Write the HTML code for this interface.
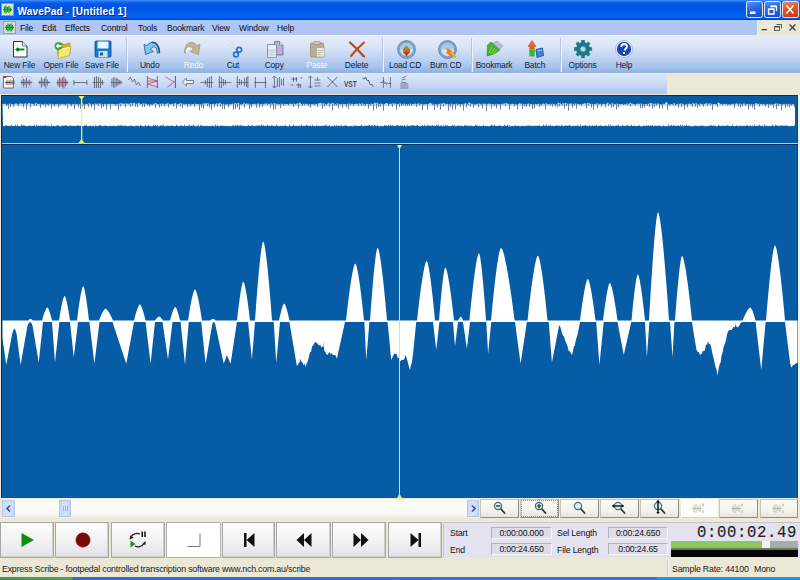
<!DOCTYPE html>
<html><head><meta charset="utf-8">
<style>
*{margin:0;padding:0;box-sizing:border-box}
html,body{width:800px;height:580px;overflow:hidden;background:#ece9d8;font-family:"Liberation Sans",sans-serif;}
.a{position:absolute}
#title{left:0;top:0;width:800px;height:20px;background:linear-gradient(#3d95ff 0,#2a7af8 1px,#0a5ce8 3px,#0054e0 6px,#0058e6 11px,#0062f2 15px,#0058f0 19px,#0040c8 19px,#0040c8 20px);}
#title .t{left:17.5px;top:4.5px;color:#fff;font-weight:bold;font-size:10px;letter-spacing:0.18px;line-height:13px;white-space:pre;text-shadow:1px 1px 0 #0a2a80;}
#menu{left:0;top:20px;width:800px;height:15px;background:linear-gradient(#a9c8f0,#afc5f5 40%,#b0c4ee);}
#menu span{position:absolute;top:2px;font-size:8.5px;letter-spacing:-0.12px;line-height:13px;color:#0a0a14;white-space:pre}
#mdi{left:757px;top:20px;width:43px;height:15px;background:#ebe8d6}
#tb{left:0;top:35px;width:800px;height:38px;background:linear-gradient(#e6edfa 0%,#dbe5f7 30%,#c2d5f2 58%,#a4c2ec 85%,#90b4e8 97%,#a4b2cc 100%);}
#tb .l{position:absolute;top:25px;font-size:8.4px;letter-spacing:-0.12px;line-height:10px;color:#08122a;white-space:pre;text-align:center}
#tb .sep{position:absolute;top:3px;width:1px;height:34px;background:#b4c6e6;box-shadow:1px 0 0 #eef3fc}
#tb2{left:0;top:73px;width:667px;height:22px;background:linear-gradient(#dce8f9 0%,#cfe0f6 35%,#b8d0f2 75%,#a6c3ee 100%);}
#tb2r{left:667px;top:73px;width:133px;height:22px;background:#ebe8d7}
#wave{left:0;top:94px;width:800px;height:404px;background:#ece9d8}
#status{left:0;top:559px;width:800px;height:18px;background:#ebe8d8;}
#status span{position:absolute;top:5px;font-size:8.8px;letter-spacing:-0.2px;line-height:10px;color:#1a1a1a;white-space:pre}
#task{left:0;top:577px;width:800px;height:3px;background:linear-gradient(90deg,#3f9a46 0,#4aa850 72px,#2d6fd6 73px,#2f72d8 656px,#1a98ea 657px,#1a98ea 800px)}
.btn{position:absolute;top:522px;height:36px;background:linear-gradient(#fbfbfb 0%,#f3f3f3 50%,#e2e2e2 100%);border:1px solid #a7a7a7;box-shadow:inset -1px -1px 0 #cfcfcf}
.zb{position:absolute;top:499px;height:19px;background:linear-gradient(#fdfdfd,#ecebe6);border:1px solid #b9b7ae;border-bottom-color:#8a887e;border-right-color:#8a887e}
#info{left:442px;top:521px;width:358px;height:38px;background:#e3e1ee;border-top:1px solid #bdbdbd}
.lab{position:absolute;font-size:8.7px;letter-spacing:-0.15px;line-height:10px;color:#111;white-space:pre}
.vb{position:absolute;height:12px;background:#dfdde8;border-top:1px solid #b4b3bd;border-left:1px solid #b4b3bd;border-bottom:1px solid #f5f5f8;border-right:1px solid #f5f5f8}
</style></head><body>
<!-- title -->
<div id="title" class="a">
 <svg class="a" style="left:1px;top:3px" width="13" height="13" viewBox="0 0 13 13"><rect x="0.5" y="0.5" width="12" height="12" fill="#d8e4d0" stroke="#8fa08a"/><path d="M2 6.5h9M3.5 3.5v6M5 2.5v8M6.5 4v5M8 3v7M9.5 4.5v4" stroke="#0a9a1a" stroke-width="1.2"/></svg>
 <div class="a t">WavePad - [Untitled 1]</div>
 <svg class="a" style="left:745px;top:0" width="55" height="19" viewBox="745 0 55 19"><defs><linearGradient id="gb" x1="0" y1="0" x2="0.3" y2="1"><stop offset="0" stop-color="#5b95f7"/><stop offset="0.5" stop-color="#2a67e8"/><stop offset="1" stop-color="#1c52d4"/></linearGradient><linearGradient id="gr" x1="0" y1="0" x2="0.3" y2="1"><stop offset="0" stop-color="#f08a6a"/><stop offset="0.5" stop-color="#e0582e"/><stop offset="1" stop-color="#c8401c"/></linearGradient></defs><rect x="746.5" y="1.5" width="16" height="16" rx="2" fill="url(#gb)" stroke="#dfe8fa" stroke-width="1"/><rect x="764.5" y="1.5" width="16" height="16" rx="2" fill="url(#gb)" stroke="#dfe8fa" stroke-width="1"/><rect x="782.5" y="1.5" width="16" height="16" rx="2" fill="url(#gr)" stroke="#dfe8fa" stroke-width="1"/><rect x="750" y="11.5" width="5.5" height="2.5" fill="#fff"/><path d="M770.5 6.5h6v4.5M768.5 9.2h5.5v4.8h-5.5z" fill="none" stroke="#fff" stroke-width="1.3"/><rect x="768.5" y="8.5" width="5.5" height="1.5" fill="#fff"/><rect x="770.5" y="5.5" width="6" height="1.5" fill="#fff"/><path d="M786.5 5.5l7 8M793.5 5.5l-7 8" stroke="#fff" stroke-width="1.5"/></svg>
</div>
<!-- menu -->
<div id="menu" class="a">
 <svg class="a" style="left:3px;top:1px" width="13" height="13" viewBox="0 0 13 13"><rect x="0.5" y="0.5" width="12" height="12" fill="#d4dcd8" stroke="#98a0a8" stroke-width="1"/><path d="M2 6.5h9M3.5 4v5M5 2.5v8M6.5 3.5v6M8 2.5v8M9.5 4v5" stroke="#0a9a1a" stroke-width="1.2"/></svg>
 <span style="left:20px">File</span><span style="left:42px">Edit</span><span style="left:65px">Effects</span><span style="left:101px">Control</span><span style="left:138px">Tools</span><span style="left:167px">Bookmark</span><span style="left:212px">View</span><span style="left:239px">Window</span><span style="left:277px">Help</span>
</div>
<div id="mdi" class="a"><svg class="a" style="left:0;top:0" width="43" height="15" viewBox="757 20 43 15"><rect x="761.5" y="29" width="5.5" height="1.3" fill="#444"/><path d="M776.5 24.5h5v4M774.5 26.5h5v4h-5z" fill="none" stroke="#444" stroke-width="0.9"/><rect x="774.5" y="26.3" width="5" height="1.1" fill="#444"/><path d="M789.5 24.5l6 6M795.5 24.5l-6 6" stroke="#444" stroke-width="1.3"/></svg></div>
<!-- toolbar -->
<div id="tb" class="a">
<svg class="a" style="left:12.0px;top:4.5px" width="19" height="19" viewBox="0 0 19 19"><path d="M1.5 1.5h9l4.5 4.5v11h-13.5z" fill="#fff" stroke="#333" stroke-width="1"/><path d="M10.5 1.5v4.5h4.5" fill="#eee" stroke="#555" stroke-width="0.8"/><path d="M3 9.5l3-2.5v1.6h6.5v1.8h-6.5v1.6z" fill="#0d8a1a"/><rect x="6" y="8" width="1" height="3" fill="#0a6a12"/></svg><div class="l" style="left:-10.5px;width:60px;color:#0e1a33;">New File</div><svg class="a" style="left:53.6px;top:4.5px" width="19" height="19" viewBox="0 0 19 19"><path d="M2.5 5.5l5.5-2l2 1.2l6-1.7v11l-11.5 3.5z" fill="#c8b820" stroke="#9a8c10" stroke-width="0.7"/><path d="M4.5 8.5l12.5-2.5l-1.5 9.5l-11.5 3z" fill="#f0ea70" stroke="#b8a818" stroke-width="0.7"/><path d="M6 9.5l9.5-2" stroke="#fffbb0" stroke-width="0.8"/><circle cx="4.5" cy="6" r="3.6" fill="#3cb030" stroke="#1a7a1a" stroke-width="0.6"/><path d="M1.5 6l3-2.5v1.6h3v1.8h-3v1.6z" fill="#e8ffe0"/></svg><div class="l" style="left:31.0px;width:60px;color:#0e1a33;">Open File</div><svg class="a" style="left:94.0px;top:4.5px" width="19" height="19" viewBox="0 0 19 19"><rect x="1" y="1" width="16" height="16" rx="1" fill="#1878c8" stroke="#0a4a90" stroke-width="0.8"/><rect x="3.5" y="1.5" width="11" height="7" fill="#eaf4ff"/><rect x="4.5" y="11" width="9" height="6" fill="#cfe2f5"/><rect x="6" y="12.5" width="3" height="3" fill="#1a5aa0"/></svg><div class="l" style="left:72.0px;width:60px;color:#0e1a33;">Save File</div><svg class="a" style="left:142.0px;top:4.5px" width="19" height="19" viewBox="0 0 19 19"><path d="M17.5 13C17.5 6 14 1.5 9.5 2.5C7.5 3 6 4 5 5.5L2 4.5L3.5 14.5L11.5 11.5L8.5 9.5C9.5 7.5 11 6.5 12.5 7C14.5 7.5 15.5 10 15 13Z" fill="#86c0ea" stroke="#2a6aa8" stroke-width="0.9"/><path d="M17.5 13C17.5 6 14 1.5 9.5 2.5" fill="none" stroke="#1a5a98" stroke-width="1.6"/></svg><div class="l" style="left:119.7px;width:60px;color:#0e1a33;">Undo</div><svg class="a" style="left:183.0px;top:4.5px" width="19" height="19" viewBox="0 0 19 19"><g transform="translate(19,0) scale(-1,1)"><path d="M17.5 13C17.5 6 14 1.5 9.5 2.5C7.5 3 6 4 5 5.5L2 4.5L3.5 14.5L11.5 11.5L8.5 9.5C9.5 7.5 11 6.5 12.5 7C14.5 7.5 15.5 10 15 13Z" fill="#c2b496" stroke="#a89878" stroke-width="0.9"/><path d="M15.5 13C15.5 10 14 8 12 8" fill="none" stroke="#fff" stroke-width="1.5"/></g></svg><div class="l" style="left:163.5px;width:60px;color:#f4f6fa;text-shadow:0 0 1px #b8c4d8;">Redo</div><svg class="a" style="left:224.8px;top:4.5px" width="19" height="19" viewBox="0 0 19 19"><path d="M2 4l9 6M5 1l6 9" stroke="#f4f6f8" stroke-width="1.8"/><path d="M2 4l9 6M5 1l6 9" stroke="#9aa4b0" stroke-width="0.5"/><circle cx="14.2" cy="9.8" r="2.4" fill="none" stroke="#2a72c8" stroke-width="1.7"/><circle cx="11" cy="14.5" r="2.4" fill="none" stroke="#2a72c8" stroke-width="1.7"/></svg><div class="l" style="left:203.0px;width:60px;color:#0e1a33;">Cut</div><svg class="a" style="left:266.0px;top:4.5px" width="19" height="19" viewBox="0 0 19 19"><path d="M8.5 1.5h5l3.5 3.5v10h-8.5z" fill="#b8b0d0" stroke="#6a6890" stroke-width="0.8"/><path d="M13.5 1.5v3.5h3.5" fill="#e8e4f4" stroke="#6a6890" stroke-width="0.6"/><path d="M1.5 4.5h9v13h-9z" fill="#e8eef6" stroke="#7a7e98" stroke-width="0.8"/><path d="M2.5 9.5h7v6h-7z" fill="#c8d2dc"/><path d="M2.5 11.5h7M2.5 13.5h7" stroke="#e8eef6" stroke-width="0.6"/></svg><div class="l" style="left:244.2px;width:60px;color:#0e1a33;">Copy</div><svg class="a" style="left:308.5px;top:4.5px" width="19" height="19" viewBox="0 0 19 19"><rect x="1.5" y="3" width="13" height="14" rx="1" fill="#b8ae96" stroke="#9a9078" stroke-width="0.8"/><rect x="5" y="1.5" width="6" height="3" fill="#d0c8b4" stroke="#9a9078" stroke-width="0.6"/><path d="M7.5 7.5h8v9.5h-8z" fill="#e8e4da" stroke="#a8a08c" stroke-width="0.7"/><path d="M9 10.5h5M9 12.5h5M9 14.5h3" stroke="#aaa" stroke-width="0.6"/></svg><div class="l" style="left:287.0px;width:60px;color:#f4f6fa;text-shadow:0 0 1px #b8c4d8;">Paste</div><svg class="a" style="left:348.0px;top:4.5px" width="19" height="19" viewBox="0 0 19 19"><path d="M2 2.5C6 6 10 10 16 16.5" stroke="#c44414" stroke-width="2.3" stroke-linecap="round"/><path d="M16 2.5C12 6 7 11 3 16" stroke="#c84a18" stroke-width="2.1" stroke-linecap="round"/></svg><div class="l" style="left:326.5px;width:60px;color:#0e1a33;">Delete</div><svg class="a" style="left:396.5px;top:4.5px" width="19" height="19" viewBox="0 0 19 19"><circle cx="9.5" cy="9.5" r="9" fill="#7aa4cc" stroke="#5a84b0" stroke-width="0.8"/><circle cx="9.5" cy="9.5" r="6.5" fill="#d0e4f4"/><path d="M3 9.5a6.5 6.5 0 0 1 13 0" fill="#a8c8e4"/><circle cx="9.5" cy="11" r="3.6" fill="#e85a10"/><circle cx="9.5" cy="8" r="2" fill="#60b040"/><path d="M7 12l2.5 5l2.5-5z" fill="#c83808"/></svg><div class="l" style="left:375.0px;width:60px;color:#0e1a33;">Load CD</div><svg class="a" style="left:438.3px;top:4.5px" width="19" height="19" viewBox="0 0 19 19"><circle cx="9.5" cy="9.5" r="9" fill="#7aa4cc" stroke="#5a84b0" stroke-width="0.8"/><circle cx="9.5" cy="9.5" r="6.5" fill="#d0e4f4"/><path d="M3 9.5a6.5 6.5 0 0 1 13 0" fill="#a8c8e4"/><path d="M7 8c4 0 9 4 11 10c-4-1-8-3-10-5.5c2-1 2-3-1-4.5z" fill="#f07818"/><path d="M11 12l7 6l-3-5z" fill="#ffc030"/></svg><div class="l" style="left:415.7px;width:60px;color:#0e1a33;">Burn CD</div><svg class="a" style="left:484.6px;top:4.5px" width="19" height="19" viewBox="0 0 19 19"><path d="M2 16L2.5 5L6 2L15 10L9 14z" fill="#44b42a" stroke="#2a8a1a" stroke-width="0.6"/><path d="M4 13l3-6M6 14l4-6M8.5 14l3-4" stroke="#8ad860" stroke-width="0.9"/><path d="M8 3l4-2l6 5l-3 3z" fill="#b0b0d8" stroke="#8888b8" stroke-width="0.5"/><path d="M10 3.5l5 4M12 2.5l5 4" stroke="#e8e8f8" stroke-width="0.6"/></svg><div class="l" style="left:464.0px;width:60px;color:#0e1a33;">Bookmark</div><svg class="a" style="left:526.0px;top:4.5px" width="19" height="19" viewBox="0 0 19 19"><path d="M6 0.5l4 6h-8z" fill="#e86a28" stroke="#b04010" stroke-width="0.5"/><path d="M3.5 6.5h5v3h-5z" fill="#d85a20"/><path d="M3 9.5h6l-0.5 7h-5z" fill="#3ab83a"/><path d="M10 9.5l6.5-1.5l1 7.5l-6.5 2z" fill="#3a88d8" stroke="#1a4aa0" stroke-width="0.8"/><path d="M11.5 11l4.5-1" stroke="#b8e0ff" stroke-width="0.8"/></svg><div class="l" style="left:504.8px;width:60px;color:#0e1a33;">Batch</div><svg class="a" style="left:573.6px;top:4.5px" width="19" height="19" viewBox="0 0 19 19"><path d="M15.44 7.56L17.67 7.51L17.67 10.49L15.44 10.44L15.10 11.53L14.57 12.54L16.19 14.08L14.08 16.19L12.54 14.57L11.53 15.10L10.44 15.44L10.49 17.67L7.51 17.67L7.56 15.44L6.47 15.10L5.46 14.57L3.92 16.19L1.81 14.08L3.43 12.54L2.90 11.53L2.56 10.44L0.33 10.49L0.33 7.51L2.56 7.56L2.90 6.47L3.43 5.46L1.81 3.92L3.92 1.81L5.46 3.43L6.47 2.90L7.56 2.56L7.51 0.33L10.49 0.33L10.44 2.56L11.53 2.90L12.54 3.43L14.08 1.81L16.19 3.92L14.57 5.46L15.10 6.47Z" fill="#1a7a8a" stroke="#0e5a68" stroke-width="0.5"/><circle cx="9" cy="9" r="2.6" fill="#bfd8e0"/></svg><div class="l" style="left:552.5px;width:60px;color:#0e1a33;">Options</div><svg class="a" style="left:615.0px;top:4.5px" width="19" height="19" viewBox="0 0 19 19"><circle cx="9" cy="9" r="8.5" fill="#fff" stroke="#8090b0" stroke-width="0.6"/><circle cx="9" cy="9" r="7.2" fill="#1848b8"/><path d="M6.3 7c0-2 1.3-3 2.9-3s2.8 1 2.8 2.6c0 1.8-2.2 2-2.2 3.8" fill="none" stroke="#fff" stroke-width="1.8"/><rect x="8" y="12" width="2" height="2" fill="#fff"/></svg><div class="l" style="left:594.0px;width:60px;color:#0e1a33;">Help</div><div class="sep" style="left:126px"></div><div class="sep" style="left:382px"></div><div class="sep" style="left:471px"></div><div class="sep" style="left:560px"></div>
</div>
<div id="tb2" class="a"><svg class="a" style="left:0;top:0" width="667" height="21" viewBox="0 73 667 21"><path d="M3.4000000000000004 76.5h8l2 2v9.5h-10z" fill="#fff" stroke="#333" stroke-width="0.68"/><rect x="3.4000000000000004" y="76" width="3" height="2" fill="#e02020"/><path d="M4.9 82.5h7" stroke="#402020" stroke-width="0.68"/><path d="M6.4 80.5v4.0M7.9 79.5v6.0M9.4 80.5v4.0M10.9 79.5v6.0M12.4 80.5v4.0M13.9 80.5v4.0" stroke="#402020" stroke-width="0.60"/><rect x="21.9" y="76.5" width="9" height="11" fill="none" stroke="#e070a0" stroke-width="0.60" stroke-dasharray="1.2 1.2"/><path d="M20.4 82.5h12" stroke="#485060" stroke-width="0.68"/><path d="M21.9 80.5v4.0M23.4 78.5v8.0M24.9 79.5v6.0M26.4 77.5v10.0M27.9 80.5v4.0M29.4 79.5v6.0M30.9 81.5v2.0" stroke="#485060" stroke-width="0.75"/><path d="M38.4 82.5h12" stroke="#485060" stroke-width="0.68"/><path d="M39.9 80.5v4.0M41.4 77.5v10.0M42.9 79.5v6.0M44.4 78.5v8.0M45.9 76.5v12.0M47.4 79.5v6.0M48.9 81.5v2.0" stroke="#485060" stroke-width="0.75"/><path d="M56.4 82.5h12" stroke="#703048" stroke-width="0.68"/><path d="M57.9 79.5v6.0M59.4 77.5v10.0M60.9 78.5v8.0M62.4 77.5v10.0M63.9 76.5v12.0M65.4 78.5v8.0M66.9 80.5v4.0" stroke="#703048" stroke-width="0.75"/><path d="M73.9 82.5h13M73.9 80v5M86.9 80v5" stroke="#485060" stroke-width="0.75"/><path d="M92.4 82.5h12" stroke="#485060" stroke-width="0.60"/><path d="M94.4 77v11M96.4 76v12M98.4 77v11M100.4 78v10M102.4 80v5" stroke="#485060" stroke-width="0.83"/><path d="M110.4 82.5h12" stroke="#406070" stroke-width="0.68"/><path d="M111.9 78.5v8.0M113.4 77.5v10.0M114.9 77.5v10.0M116.4 78.5v8.0M117.9 79.5v6.0M119.4 80.5v4.0M120.9 80.5v4.0" stroke="#406070" stroke-width="0.75"/><path d="M116.4 78l4 4l-4 3" fill="none" stroke="#d83050" stroke-width="0.75"/><path d="M128.4 80l2-3l2 5l2-3l2 6l2-3l2 4" fill="none" stroke="#485060" stroke-width="0.68"/><path d="M147.4 76v12M157.4 76v12" stroke="#485060" stroke-width="0.75"/><path d="M147.4 78l10 3l-10 3l10 3M147.4 81l10 0" fill="none" stroke="#d83050" stroke-width="0.68"/><path d="M175.4 76v12" stroke="#485060" stroke-width="0.90"/><path d="M165.4 77l9 5l-7 5" fill="none" stroke="#d83050" stroke-width="0.68"/><path d="M182.4 82l4-4v2.5h7v3h-7v2.5z" fill="#f0f4fa" stroke="#485060" stroke-width="0.68"/><path d="M200.4 82.5h13" stroke="#485060" stroke-width="0.68"/><path d="M205.4 80v5M207.4 78v9M209.4 77v11M211.4 76v12" stroke="#485060" stroke-width="0.75"/><path d="M218.4 82.5h13" stroke="#485060" stroke-width="0.68"/><path d="M219.4 76v12M221.4 77v11M223.4 79v7M225.4 80v5" stroke="#485060" stroke-width="0.75"/><path d="M236.4 82.5h12" stroke="#485060" stroke-width="0.68"/><path d="M237.4 76v12M239.4 79v6M241.4 80v5M244.4 78v8M246.4 77v10M247.9 76v12" stroke="#485060" stroke-width="0.75"/><path d="M254.39999999999998 82.5h12M255.39999999999998 77v11M265.4 77v11" stroke="#485060" stroke-width="0.75"/><path d="M274.4 76.5v11.5M272.4 78l2-2l2 2M272.4 86l2 2l2-2" fill="none" stroke="#485060" stroke-width="0.75"/><path d="M277.4 78v9M279.4 77v10M281.4 79v6M283.4 78v8" stroke="#485060" stroke-width="0.75"/><path d="M291.4 79h6M293.4 77v5M296.4 77v5M290.4 85h3M296.4 85h5M298.4 83v5M300.4 84v4" stroke="#485060" stroke-width="0.75"/><circle cx="301.4" cy="78" r="0.8" fill="#d83050"/><path d="M310.4 76.5v11.5M308.4 78l2-2l2 2M308.4 86l2 2l2-2" fill="none" stroke="#485060" stroke-width="0.75"/><path d="M314.4 80h6M314.4 83h6M314.4 86h6" stroke="#485060" stroke-width="0.68"/><path d="M317.4 77v4" stroke="#d83050" stroke-width="0.68"/><path d="M327.4 77l10 10M337.4 77l-10 10" stroke="#485060" stroke-width="0.83"/><text x="343.9" y="87" font-family="Liberation Sans" font-size="9" font-weight="bold" fill="#485060" textLength="13" lengthAdjust="spacingAndGlyphs">VST</text><path d="M362.4 78l2 1l1-2l2 4l1-1l2 5l1-1l2 3" fill="none" stroke="#485060" stroke-width="0.83"/><path d="M380.4 82.5l2 0l1-2l1 3l1-1l1 2l1-2l1 1h3M383.4 77v11M390.4 77v11" fill="none" stroke="#485060" stroke-width="0.68"/><path d="M402.4 78l4-2M401.4 80l4-1M401.4 82l5 1M400.4 84h8M400.4 86h8M400.4 88h8" stroke="#485060" stroke-width="0.68"/></svg></div>
<div id="tb2r" class="a"></div>
<!-- waveform -->
<div id="wave" class="a"><svg class="a" style="left:0;top:0" width="800" height="404" viewBox="0 94 800 404">
<rect x="0" y="95" width="800" height="403" fill="#ece9d8"/>
<rect x="1.5" y="95.5" width="796.5" height="404" fill="#065da6" stroke="#1e2e40" stroke-width="1"/>
<rect x="2" y="143" width="796" height="1" fill="#a8d2f8"/>
<rect x="2" y="144" width="796" height="1" fill="#06305a"/>
<path d="M2.5 104 L3 104.05 L4 104.07 L5 103.78 L6 103.94 L7 104.41 L8 104.58 L9 104.19 L10 103.3 L11 104.06 L12 104.12 L13 104.26 L14 104.6 L15 104.31 L16 102.74 L17 104.45 L18 104.13 L19 104.07 L20 103.67 L21 103.37 L22 103.99 L23 103.66 L24 104.16 L25 103.37 L26 103.62 L27 104.4 L28 103.81 L29 102.76 L30 103.86 L31 103.76 L32 103.84 L33 104.05 L34 104.17 L35 103.75 L36 102.74 L37 103.8 L38 104.2 L39 103.64 L40 104.3 L41 104.2 L42 103.98 L43 104.45 L44 104.49 L45 103.78 L46 103.63 L47 104.58 L48 104.13 L49 104.51 L50 103.62 L51 104.33 L52 103.68 L53 104.5 L54 104.39 L55 104.29 L56 104.02 L57 104.17 L58 104.18 L59 104.24 L60 104.33 L61 104.18 L62 103.68 L63 104.2 L64 104.3 L65 104.52 L66 103.9 L67 103.77 L68 104.04 L69 103.62 L70 104.51 L71 104.18 L72 104.1 L73 104.31 L74 103.77 L75 103.81 L76 104.09 L77 104.58 L78 103.63 L79 104.31 L80 104.19 L81 103.62 L82 102.8 L83 104.23 L84 104.56 L85 104.06 L86 103.91 L87 104.3 L88 104.36 L89 103.11 L90 103.73 L91 104.51 L92 104.48 L93 104.06 L94 104.32 L95 102.97 L96 104.58 L97 103.92 L98 103.29 L99 104.37 L100 103.21 L101 103.94 L102 103.75 L103 104.44 L104 104.09 L105 103.82 L106 104.33 L107 104.44 L108 103.98 L109 103.81 L110 104.12 L111 104.14 L112 103.63 L113 104 L114 104.09 L115 104.14 L116 104.52 L117 103.73 L118 104.5 L119 103.79 L120 103.73 L121 102.76 L122 103.96 L123 103.57 L124 103.8 L125 103.98 L126 102.81 L127 104.13 L128 103.35 L129 104.5 L130 103.03 L131 102.64 L132 103.7 L133 103.79 L134 102.59 L135 103.81 L136 104.1 L137 103.61 L138 104.11 L139 102.52 L140 104.43 L141 104.06 L142 104.07 L143 103.15 L144 103.78 L145 103.76 L146 103.62 L147 104.3 L148 104 L149 104.58 L150 104.51 L151 104.41 L152 104.48 L153 104.37 L154 103.67 L155 103.61 L156 102.81 L157 103.94 L158 104.13 L159 104.24 L160 103.66 L161 103.86 L162 103.8 L163 103.85 L164 104.11 L165 104.6 L166 103.68 L167 103.65 L168 103.33 L169 103.66 L170 104.13 L171 103.89 L172 103.88 L173 103.55 L174 104.35 L175 102.87 L176 103.67 L177 104.08 L178 104.12 L179 104.07 L180 103.27 L181 103.01 L182 104.04 L183 103.86 L184 104.38 L185 104.55 L186 103.71 L187 104.22 L188 104.29 L189 104.23 L190 103.85 L191 104.39 L192 104.03 L193 104.01 L194 104.15 L195 103.56 L196 104.26 L197 104.22 L198 104.02 L199 103.97 L200 103.93 L201 104.52 L202 103.7 L203 103.68 L204 104.29 L205 102.68 L206 103.9 L207 103.35 L208 102.9 L209 104.52 L210 104.04 L211 103.92 L212 103.95 L213 103.96 L214 103.79 L215 104.14 L216 103.78 L217 103.11 L218 104.17 L219 103.58 L220 102.58 L221 103.68 L222 104.35 L223 103.82 L224 104.36 L225 104.57 L226 104.14 L227 104.51 L228 104.27 L229 104.43 L230 104.24 L231 104.4 L232 103.75 L233 103.67 L234 103.89 L235 102.94 L236 103.09 L237 104.35 L238 102.74 L239 103.4 L240 104.36 L241 104.42 L242 104.49 L243 104.15 L244 102.4 L245 103.98 L246 103.87 L247 103.13 L248 104.4 L249 103.27 L250 104.47 L251 104.59 L252 103.75 L253 104.42 L254 103.68 L255 103.7 L256 104.56 L257 103.9 L258 103.28 L259 104.14 L260 104.43 L261 103.68 L262 104.32 L263 103.71 L264 104.57 L265 103.61 L266 103.84 L267 103.61 L268 103.81 L269 103.98 L270 103.94 L271 102.76 L272 104.55 L273 103.93 L274 102.72 L275 103.78 L276 103.85 L277 103.72 L278 104.52 L279 104.25 L280 103.99 L281 103.62 L282 104.58 L283 103.71 L284 103.68 L285 104.39 L286 103.76 L287 104.15 L288 103.74 L289 104.12 L290 103.8 L291 103.43 L292 104.3 L293 103.96 L294 103.22 L295 104.16 L296 104.51 L297 102.96 L298 103.64 L299 103.79 L300 102.15 L301 104.26 L302 104.34 L303 104.1 L304 103.74 L305 103.77 L306 104.17 L307 103.64 L308 104.56 L309 104.01 L310 104.36 L311 104.59 L312 104.01 L313 104.51 L314 104.03 L315 103.65 L316 104.33 L317 103.9 L318 103.72 L319 102.95 L320 103.84 L321 102.47 L322 104.27 L323 103.29 L324 103.31 L325 104.14 L326 103.84 L327 103.66 L328 104 L329 102.3 L330 104.1 L331 103.63 L332 103.24 L333 102.75 L334 103.8 L335 104.32 L336 103.91 L337 103.27 L338 103.71 L339 104.04 L340 104.26 L341 104.26 L342 103.83 L343 104.27 L344 103.69 L345 104.13 L346 104.2 L347 103.98 L348 103.85 L349 103.79 L350 103.63 L351 103.98 L352 103.78 L353 103.96 L354 104.12 L355 104.28 L356 103.77 L357 103.55 L358 104.39 L359 103.22 L360 103.64 L361 104.17 L362 103.01 L363 104.04 L364 103.67 L365 104.14 L366 103.75 L367 103.91 L368 103.86 L369 104.04 L370 104.29 L371 103.66 L372 103.82 L373 104.09 L374 103.74 L375 102.3 L376 103.99 L377 102.18 L378 103.95 L379 103.84 L380 103.96 L381 103.61 L382 103.66 L383 104.46 L384 104.06 L385 103.98 L386 103.12 L387 103.1 L388 104.05 L389 103.89 L390 104.29 L391 103.23 L392 104.52 L393 102.56 L394 104.37 L395 103.62 L396 103.68 L397 104.37 L398 103.93 L399 103.73 L400 103.08 L401 104.33 L402 103.8 L403 104.01 L404 103.83 L405 103.78 L406 104.17 L407 103.9 L408 103.82 L409 104.56 L410 103.59 L411 103.66 L412 104.1 L413 104 L414 104.13 L415 103.15 L416 104.15 L417 103.99 L418 103.26 L419 104.07 L420 103.62 L421 104.17 L422 103.79 L423 104.55 L424 104.54 L425 104.22 L426 103.88 L427 103.98 L428 103.74 L429 103.96 L430 102.77 L431 103.6 L432 103.84 L433 104.15 L434 104.43 L435 103.95 L436 104.32 L437 104.56 L438 104.22 L439 103.97 L440 103.76 L441 103.78 L442 103.51 L443 103.71 L444 102.78 L445 103.65 L446 104.4 L447 103.85 L448 103.93 L449 104.43 L450 104.31 L451 103.84 L452 103.81 L453 104.54 L454 104.29 L455 104 L456 103.65 L457 103.64 L458 104.1 L459 104.14 L460 103.91 L461 103.88 L462 104.37 L463 104.29 L464 103.59 L465 103.85 L466 103.07 L467 104.23 L468 104.08 L469 102.31 L470 102.95 L471 103.8 L472 104.01 L473 103.66 L474 104.22 L475 104.46 L476 104.43 L477 103.45 L478 103.96 L479 103.8 L480 103.61 L481 104.39 L482 104.4 L483 103.16 L484 104.31 L485 103.62 L486 103.99 L487 104.41 L488 103.95 L489 103.42 L490 103.81 L491 104.12 L492 103.95 L493 104.1 L494 104.14 L495 104.48 L496 103.71 L497 103.95 L498 103.78 L499 104.55 L500 103.96 L501 104.23 L502 103.81 L503 104.46 L504 102.91 L505 104.05 L506 103.08 L507 103.17 L508 104.19 L509 103.75 L510 104.34 L511 104.59 L512 103.73 L513 103.83 L514 104.54 L515 104.11 L516 104.47 L517 104.41 L518 104.05 L519 103.67 L520 102.89 L521 104.37 L522 103.85 L523 103.64 L524 104.16 L525 104.45 L526 103.67 L527 104.23 L528 103.8 L529 103.62 L530 104.23 L531 104.1 L532 103.89 L533 104.21 L534 104.59 L535 103.96 L536 103.75 L537 104.42 L538 104.11 L539 103.43 L540 104.47 L541 104.28 L542 103.99 L543 103.42 L544 104.04 L545 104.29 L546 102.67 L547 104.02 L548 104.45 L549 103.7 L550 103.96 L551 104.27 L552 103.6 L553 103.96 L554 104.27 L555 104.58 L556 104.43 L557 103.9 L558 102.77 L559 103.38 L560 102.71 L561 104.34 L562 104.33 L563 102.78 L564 103.97 L565 102.95 L566 103.26 L567 103.69 L568 103.76 L569 103.82 L570 104.06 L571 102.99 L572 104.01 L573 104.56 L574 103.75 L575 103.52 L576 103.71 L577 104.24 L578 103.62 L579 104.52 L580 104.25 L581 104.17 L582 103.99 L583 103.86 L584 104.08 L585 102.8 L586 104.13 L587 103.26 L588 102.96 L589 103.61 L590 103.61 L591 103.97 L592 103.9 L593 103.92 L594 104.21 L595 103.87 L596 104.46 L597 102.8 L598 103.93 L599 104.39 L600 103.43 L601 104.53 L602 104.53 L603 103.61 L604 104.28 L605 103.67 L606 104.35 L607 103.56 L608 102.42 L609 103.97 L610 104.55 L611 103.81 L612 103.13 L613 103.63 L614 104.27 L615 104.29 L616 103.71 L617 103.67 L618 103.95 L619 103.99 L620 103.96 L621 104.58 L622 103.83 L623 104.17 L624 104.42 L625 104.03 L626 104.58 L627 102.96 L628 103.91 L629 104.3 L630 102.51 L631 103.23 L632 103.8 L633 103.72 L634 104.5 L635 103.96 L636 103.89 L637 103.83 L638 103.85 L639 103.73 L640 103.89 L641 103.18 L642 104.21 L643 104.13 L644 104.38 L645 104.54 L646 103.83 L647 104.33 L648 104.17 L649 103.14 L650 103.67 L651 102.68 L652 103.47 L653 103.63 L654 104.29 L655 103.33 L656 104.13 L657 103.8 L658 103.36 L659 104.57 L660 103.9 L661 104.54 L662 104.53 L663 103.62 L664 104.29 L665 103.75 L666 102.33 L667 102.38 L668 104.12 L669 104.31 L670 104.58 L671 103.94 L672 104.37 L673 104.13 L674 102.73 L675 103.75 L676 104.38 L677 104.25 L678 103.85 L679 103.83 L680 104.33 L681 102.99 L682 103.82 L683 103.97 L684 104.59 L685 104.39 L686 104.39 L687 104.19 L688 103.67 L689 103.67 L690 103.81 L691 104.53 L692 103.74 L693 102.78 L694 104.33 L695 103.56 L696 103.15 L697 103.72 L698 104.14 L699 104.13 L700 103.36 L701 104.52 L702 103.93 L703 104.39 L704 104.2 L705 103.79 L706 103.62 L707 103.39 L708 103.48 L709 104.1 L710 103.33 L711 103.86 L712 104.07 L713 103.96 L714 104.02 L715 103.93 L716 104.54 L717 103.76 L718 102.8 L719 102.76 L720 103.7 L721 104.16 L722 104.11 L723 104.1 L724 104.23 L725 104.1 L726 104.57 L727 103.68 L728 104.43 L729 104.5 L730 104.16 L731 104.08 L732 104.1 L733 103.82 L734 104.58 L735 104.4 L736 103.18 L737 103.84 L738 104.11 L739 104.21 L740 103.24 L741 104.58 L742 103.79 L743 104.59 L744 103.03 L745 104.39 L746 104.54 L747 103.98 L748 103.76 L749 104.25 L750 104.12 L751 103.79 L752 104.54 L753 104.51 L754 104.22 L755 103.93 L756 102.79 L757 104.07 L758 103.8 L759 103.85 L760 104.13 L761 104.01 L762 104.07 L763 104.03 L764 104.16 L765 104.5 L766 104.6 L767 104.14 L768 103.87 L769 103.92 L770 104.31 L771 103.71 L772 104.38 L773 104.29 L774 104.03 L775 104 L776 103.15 L777 103.65 L778 103.67 L779 103.71 L780 104.09 L781 104.13 L782 104.47 L783 104 L784 104.39 L785 103.97 L786 103.92 L787 103.9 L788 104.07 L789 103.98 L790 104.39 L791 104.34 L792 104.55 L793 104.04 L794 104.37 L795 103.94 L795 125.42 L794 126.38 L793 125.63 L792 126.07 L791 126.12 L790 126.07 L789 126.38 L788 125.85 L787 125.86 L786 125.81 L785 125.85 L784 125.85 L783 125.66 L782 125.81 L781 125.62 L780 125.72 L779 126.25 L778 125.87 L777 125.42 L776 125.53 L775 126.08 L774 126.14 L773 125.53 L772 125.67 L771 126.35 L770 125.83 L769 126.05 L768 126.13 L767 125.95 L766 125.59 L765 125.94 L764 126.34 L763 126.16 L762 125.52 L761 125.64 L760 126.04 L759 125.76 L758 125.64 L757 125.65 L756 125.94 L755 125.92 L754 126.17 L753 126.35 L752 126.33 L751 126.09 L750 125.67 L749 126.09 L748 125.63 L747 125.42 L746 125.89 L745 125.97 L744 126.17 L743 125.53 L742 126.16 L741 125.71 L740 125.51 L739 126.33 L738 126.19 L737 125.42 L736 125.7 L735 126.21 L734 126.09 L733 126.2 L732 125.6 L731 126.24 L730 125.89 L729 125.83 L728 125.65 L727 125.63 L726 125.84 L725 126.04 L724 125.49 L723 125.97 L722 125.4 L721 126.32 L720 125.75 L719 125.68 L718 125.64 L717 126.38 L716 126.28 L715 125.63 L714 125.86 L713 125.98 L712 125.72 L711 125.77 L710 125.44 L709 125.87 L708 126.2 L707 126.14 L706 125.8 L705 126.38 L704 125.87 L703 125.86 L702 125.69 L701 125.56 L700 126.16 L699 125.48 L698 126.16 L697 125.93 L696 125.45 L695 126.34 L694 125.85 L693 126.28 L692 126.35 L691 126.33 L690 126.36 L689 125.54 L688 125.78 L687 125.88 L686 125.69 L685 125.74 L684 125.54 L683 126.31 L682 126.39 L681 125.64 L680 126.19 L679 125.73 L678 125.58 L677 125.92 L676 125.64 L675 125.88 L674 125.58 L673 126.07 L672 125.99 L671 125.41 L670 125.81 L669 126.19 L668 126.16 L667 126.09 L666 126.36 L665 126.36 L664 126.01 L663 125.99 L662 126.33 L661 126.35 L660 126.1 L659 125.53 L658 125.96 L657 125.82 L656 125.9 L655 125.58 L654 126.18 L653 126.38 L652 125.47 L651 125.71 L650 125.5 L649 126.06 L648 125.63 L647 125.91 L646 125.77 L645 126.19 L644 125.45 L643 126.32 L642 126.13 L641 126.25 L640 125.91 L639 125.67 L638 125.65 L637 125.94 L636 126.13 L635 126.12 L634 126.09 L633 125.98 L632 126.01 L631 125.62 L630 126.16 L629 125.95 L628 125.44 L627 125.5 L626 125.86 L625 125.96 L624 126.12 L623 125.46 L622 126.13 L621 126.1 L620 125.88 L619 126.24 L618 125.92 L617 125.56 L616 125.57 L615 126.18 L614 125.89 L613 125.78 L612 125.87 L611 125.94 L610 126.32 L609 125.71 L608 126.07 L607 126.13 L606 125.85 L605 125.84 L604 126.32 L603 125.82 L602 125.98 L601 125.42 L600 125.95 L599 125.46 L598 126.22 L597 126.23 L596 125.69 L595 125.83 L594 125.65 L593 125.92 L592 125.99 L591 125.77 L590 126.36 L589 126.37 L588 125.89 L587 125.71 L586 125.8 L585 125.46 L584 125.83 L583 125.83 L582 126.14 L581 126.3 L580 126.35 L579 125.89 L578 125.51 L577 125.45 L576 126.37 L575 125.43 L574 126.13 L573 125.41 L572 126.26 L571 125.92 L570 125.5 L569 125.96 L568 125.45 L567 125.69 L566 125.53 L565 125.7 L564 125.94 L563 126.34 L562 125.52 L561 126.21 L560 126.02 L559 126.14 L558 125.61 L557 125.8 L556 126.1 L555 125.8 L554 126.37 L553 125.72 L552 125.87 L551 126.3 L550 126.12 L549 125.49 L548 125.95 L547 126.22 L546 125.65 L545 125.64 L544 125.69 L543 125.68 L542 126 L541 126.33 L540 126.25 L539 125.68 L538 125.75 L537 125.86 L536 125.82 L535 125.81 L534 126.14 L533 125.6 L532 126.34 L531 126.09 L530 126 L529 125.72 L528 125.83 L527 126.13 L526 125.61 L525 126.3 L524 125.79 L523 126.26 L522 125.5 L521 126.31 L520 126.26 L519 126.19 L518 126.04 L517 125.94 L516 125.65 L515 125.46 L514 126.2 L513 126.05 L512 125.89 L511 126.27 L510 126.14 L509 126.39 L508 126.33 L507 125.85 L506 125.97 L505 125.82 L504 126.09 L503 125.9 L502 126.29 L501 126.04 L500 125.55 L499 125.58 L498 126.08 L497 126.11 L496 125.83 L495 126.15 L494 125.6 L493 125.72 L492 125.41 L491 125.54 L490 125.95 L489 126.14 L488 126.31 L487 126.04 L486 126.06 L485 125.63 L484 126.31 L483 125.8 L482 126.17 L481 125.8 L480 126.21 L479 126.36 L478 125.71 L477 125.47 L476 125.58 L475 125.84 L474 126.34 L473 126.06 L472 125.8 L471 125.88 L470 126.4 L469 125.71 L468 125.66 L467 125.63 L466 125.54 L465 125.52 L464 126.33 L463 126.2 L462 125.79 L461 126.02 L460 126.24 L459 125.77 L458 125.43 L457 126.13 L456 125.52 L455 126.39 L454 126.03 L453 125.53 L452 125.99 L451 126.07 L450 126.23 L449 125.82 L448 126.24 L447 125.73 L446 126.12 L445 125.91 L444 126.27 L443 126.17 L442 126.1 L441 125.53 L440 125.72 L439 126.15 L438 125.96 L437 125.56 L436 126.09 L435 125.71 L434 125.73 L433 125.96 L432 126.05 L431 125.79 L430 125.63 L429 125.55 L428 125.71 L427 125.44 L426 126.28 L425 125.82 L424 126.03 L423 125.98 L422 126.02 L421 126.07 L420 126.29 L419 125.65 L418 125.99 L417 125.46 L416 125.42 L415 126.1 L414 125.74 L413 125.57 L412 125.56 L411 125.73 L410 125.79 L409 125.63 L408 126.07 L407 126.32 L406 126.38 L405 126.03 L404 125.74 L403 126.27 L402 126.11 L401 125.55 L400 125.66 L399 125.82 L398 125.55 L397 125.45 L396 125.73 L395 125.78 L394 126.31 L393 125.76 L392 125.67 L391 125.79 L390 125.67 L389 125.47 L388 126.08 L387 125.71 L386 125.56 L385 125.62 L384 126.24 L383 126.29 L382 126.09 L381 126.05 L380 126.38 L379 126.33 L378 125.95 L377 126.16 L376 125.82 L375 125.54 L374 126.14 L373 126.39 L372 125.44 L371 125.76 L370 126.19 L369 125.56 L368 125.49 L367 125.93 L366 125.44 L365 125.64 L364 125.97 L363 126.2 L362 125.83 L361 125.58 L360 126.11 L359 125.9 L358 125.64 L357 126.17 L356 125.57 L355 126.35 L354 126.25 L353 126.18 L352 126.04 L351 125.9 L350 126.15 L349 126.39 L348 125.95 L347 126.16 L346 125.65 L345 125.45 L344 125.84 L343 126.04 L342 126.33 L341 125.99 L340 125.77 L339 125.64 L338 125.71 L337 126.34 L336 126.27 L335 126.13 L334 125.59 L333 126.4 L332 125.75 L331 126.32 L330 126.38 L329 125.71 L328 125.99 L327 126.22 L326 125.72 L325 125.4 L324 125.52 L323 125.97 L322 125.82 L321 126.37 L320 125.8 L319 125.93 L318 125.9 L317 125.47 L316 126.15 L315 126.3 L314 125.72 L313 125.93 L312 125.97 L311 126.26 L310 125.89 L309 126.09 L308 125.87 L307 125.54 L306 126.04 L305 125.66 L304 125.97 L303 125.87 L302 125.99 L301 126.07 L300 126.34 L299 125.48 L298 126.23 L297 125.69 L296 126.22 L295 125.66 L294 125.94 L293 125.52 L292 126.33 L291 125.98 L290 126.03 L289 126.24 L288 126.39 L287 125.9 L286 126.3 L285 126.01 L284 125.91 L283 125.74 L282 126.06 L281 126.1 L280 125.81 L279 126.22 L278 125.91 L277 125.47 L276 125.56 L275 126.24 L274 126.11 L273 125.49 L272 126.12 L271 125.73 L270 126.07 L269 125.7 L268 125.69 L267 126.2 L266 125.86 L265 126.11 L264 126.05 L263 125.86 L262 126.09 L261 125.87 L260 125.71 L259 125.56 L258 125.61 L257 125.82 L256 126.26 L255 125.87 L254 126.12 L253 126.22 L252 125.4 L251 125.93 L250 126.04 L249 125.66 L248 126.01 L247 125.77 L246 126.06 L245 125.92 L244 126.2 L243 125.88 L242 125.74 L241 125.66 L240 125.95 L239 125.57 L238 125.99 L237 125.58 L236 125.98 L235 126.18 L234 125.46 L233 125.82 L232 126.39 L231 125.82 L230 126.11 L229 126.36 L228 126.21 L227 126.23 L226 126.11 L225 125.89 L224 125.74 L223 125.92 L222 125.65 L221 125.54 L220 126.3 L219 126.19 L218 126.05 L217 125.94 L216 126.28 L215 125.96 L214 126.2 L213 125.79 L212 125.77 L211 126.33 L210 125.7 L209 126.31 L208 125.97 L207 126.13 L206 126.09 L205 125.48 L204 126.18 L203 125.88 L202 125.48 L201 125.77 L200 126.15 L199 126.39 L198 126.21 L197 125.61 L196 126.21 L195 126.14 L194 125.77 L193 126.08 L192 125.5 L191 125.67 L190 126.32 L189 125.59 L188 125.99 L187 125.67 L186 126.18 L185 125.64 L184 126.4 L183 125.82 L182 125.86 L181 125.52 L180 125.86 L179 126.22 L178 126.12 L177 125.64 L176 125.83 L175 126.34 L174 126.3 L173 125.56 L172 125.7 L171 125.96 L170 125.77 L169 125.82 L168 126.01 L167 125.56 L166 126.16 L165 126.21 L164 125.97 L163 125.95 L162 125.5 L161 125.45 L160 126.14 L159 126.16 L158 126.4 L157 125.97 L156 126.07 L155 126.04 L154 125.87 L153 126.12 L152 126.17 L151 126.3 L150 126.18 L149 125.66 L148 125.9 L147 126.03 L146 126.2 L145 125.91 L144 126.14 L143 126.24 L142 125.83 L141 125.73 L140 126.35 L139 126.39 L138 125.55 L137 125.95 L136 125.59 L135 126.16 L134 126.31 L133 126.09 L132 125.82 L131 125.66 L130 126.29 L129 125.71 L128 126.21 L127 126.01 L126 126.04 L125 125.93 L124 125.84 L123 125.65 L122 125.5 L121 125.72 L120 125.42 L119 126.33 L118 125.72 L117 126.22 L116 125.87 L115 126.36 L114 125.47 L113 125.96 L112 125.92 L111 126.01 L110 125.6 L109 126.37 L108 126.3 L107 125.71 L106 125.92 L105 125.69 L104 125.49 L103 126.35 L102 126.12 L101 125.54 L100 125.57 L99 125.43 L98 125.95 L97 126.26 L96 126.19 L95 126.38 L94 126.04 L93 125.6 L92 126.34 L91 125.97 L90 126.03 L89 126.12 L88 126.19 L87 126.01 L86 125.75 L85 125.87 L84 125.6 L83 126.21 L82 125.85 L81 125.64 L80 125.85 L79 125.71 L78 125.44 L77 125.47 L76 126.24 L75 126.03 L74 125.68 L73 125.68 L72 126.25 L71 125.54 L70 125.78 L69 126.21 L68 125.73 L67 126.06 L66 125.6 L65 125.41 L64 126.01 L63 125.63 L62 125.43 L61 126.24 L60 126.14 L59 126.28 L58 125.48 L57 125.78 L56 126.26 L55 126.27 L54 125.75 L53 126.1 L52 126.14 L51 126.4 L50 125.88 L49 126.36 L48 125.42 L47 126.09 L46 126.29 L45 125.77 L44 125.67 L43 125.68 L42 125.96 L41 125.58 L40 126.22 L39 125.64 L38 125.5 L37 126.28 L36 126.34 L35 126.22 L34 125.58 L33 125.88 L32 125.77 L31 125.98 L30 125.73 L29 125.61 L28 126.25 L27 126.28 L26 126.37 L25 125.52 L24 125.59 L23 125.58 L22 125.5 L21 126.36 L20 126.18 L19 125.8 L18 126.31 L17 126.36 L16 125.8 L15 125.63 L14 126.24 L13 125.68 L12 125.9 L11 126.24 L10 125.43 L9 125.93 L8 126.05 L7 125.44 L6 125.49 L5 126.03 L4 125.99 L3 126.32 Z" fill="#fff"/><rect x="2" y="103.5" width="793" height="2.5" fill="#3a6aa0" opacity="0.28"/><rect x="798" y="95" width="2" height="403" fill="#f4f3ee"/><path d="M6.5 103.5v2.53M8.5 103.5v5.64M10.5 103.5v3.74M13.5 103.5v3.25M18.5 103.5v2.67M23.5 103.5v3.64M26.5 103.5v6.15M30.5 103.5v4.27M34.5 103.5v2.47M36.5 103.5v2.32M40.5 103.5v4.36M45.5 103.5v3.88M48.5 103.5v2.37M51.5 103.5v5.12M54.5 103.5v3.09M58.5 103.5v3.93M60.5 103.5v1.73M65.5 103.5v2M67.5 103.5v4.86M71.5 103.5v3.04M74.5 103.5v5.59M78.5 103.5v3.98M80.5 103.5v5.29M82.5 103.5v2.97M84.5 103.5v5.66M88.5 103.5v3.61M91.5 103.5v3.93M94.5 103.5v6.94M98.5 103.5v2.34M101.5 103.5v4.91M103.5 103.5v3.44M106.5 103.5v6.02M110.5 103.5v5.74M115.5 103.5v2.54M118.5 103.5v6.35M120.5 103.5v2.98M125.5 103.5v3.74M130.5 103.5v3.13M132.5 103.5v2.47M135.5 103.5v3.3M137.5 103.5v3.88M142.5 103.5v3.34M144.5 103.5v3.5M147.5 103.5v1.66M149.5 103.5v3.18M152.5 103.5v1.51M155.5 103.5v4.4M159.5 103.5v3.84M161.5 103.5v2.91M164.5 103.5v3.14M168.5 103.5v3.9M173.5 103.5v3M176.5 103.5v4.97M180.5 103.5v3.1M182.5 103.5v4.64M187.5 103.5v3.89M190.5 103.5v3.07M194.5 103.5v3.55M199.5 103.5v6.83M201.5 103.5v4.14M203.5 103.5v5.17M207.5 103.5v2.78M209.5 103.5v4.09M211.5 103.5v6.33M214.5 103.5v3.64M217.5 103.5v3.19M220.5 103.5v3.27M222.5 103.5v5.68M224.5 103.5v5.92M228.5 103.5v3.94M233.5 103.5v6.29M235.5 103.5v5.43M237.5 103.5v4.37M239.5 103.5v6.31M244.5 103.5v4.36M249.5 103.5v5.8M251.5 103.5v3.72M256.5 103.5v4.37M259.5 103.5v4.2M262.5 103.5v3.41M267.5 103.5v1.63M270.5 103.5v4.14M273.5 103.5v6.14M275.5 103.5v5.55M280.5 103.5v4.64M283.5 103.5v2.37M288.5 103.5v1.86M293.5 103.5v3.38M298.5 103.5v4.78M302.5 103.5v2.65M304.5 103.5v1.85M308.5 103.5v2.61M310.5 103.5v4.33M314.5 103.5v2.04M317.5 103.5v3.47M322.5 103.5v5.17M324.5 103.5v3.13M326.5 103.5v2.07M329.5 103.5v3.36M332.5 103.5v6.82M334.5 103.5v2.33M336.5 103.5v2.22M338.5 103.5v4.95M342.5 103.5v4.47M346.5 103.5v3.72M348.5 103.5v5.36M350.5 103.5v2.01M353.5 103.5v2.73M358.5 103.5v3.02M361.5 103.5v2.42M363.5 103.5v2.08M365.5 103.5v2.77M368.5 103.5v5.2M370.5 103.5v2.65M373.5 103.5v7.08M376.5 103.5v5.35M378.5 103.5v3.6M380.5 103.5v3.38M383.5 103.5v7.26M388.5 103.5v2.75M392.5 103.5v3.32M396.5 103.5v6.14M399.5 103.5v3.47M401.5 103.5v2.28M403.5 103.5v1.89M405.5 103.5v2.8M407.5 103.5v2.47M409.5 103.5v2.3M411.5 103.5v2.29M416.5 103.5v3.32M419.5 103.5v2.1M422.5 103.5v6.58M427.5 103.5v5.97M432.5 103.5v1.58M434.5 103.5v6.33M437.5 103.5v4.31M440.5 103.5v6.13M443.5 103.5v3.12M448.5 103.5v7.13M450.5 103.5v3.56M452.5 103.5v5.98M455.5 103.5v6.1M457.5 103.5v1.92M460.5 103.5v3.55M463.5 103.5v7.12M466.5 103.5v4.01M468.5 103.5v1.98M470.5 103.5v3.31M473.5 103.5v4.26M478.5 103.5v3.69M482.5 103.5v5.02M486.5 103.5v7.47M491.5 103.5v5.16M494.5 103.5v2.95M496.5 103.5v4.79M500.5 103.5v6.01M505.5 103.5v2.37M509.5 103.5v6.18M514.5 103.5v2.95M517.5 103.5v5.8M522.5 103.5v5.55M524.5 103.5v2.83M526.5 103.5v3.31M529.5 103.5v3.45M532.5 103.5v5.69M534.5 103.5v4.72M539.5 103.5v3.7M541.5 103.5v2.14M545.5 103.5v6.04M550.5 103.5v1.93M552.5 103.5v3.16M555.5 103.5v2.91M557.5 103.5v3.99M559.5 103.5v2.91M562.5 103.5v2.13M564.5 103.5v5.17M566.5 103.5v2.46M568.5 103.5v7.14M572.5 103.5v4.35M574.5 103.5v2.01M576.5 103.5v5.27M581.5 103.5v2.76M586.5 103.5v4.69M588.5 103.5v2.01M591.5 103.5v4.04M593.5 103.5v6.06M597.5 103.5v4.75M601.5 103.5v3.34M605.5 103.5v3.88M608.5 103.5v2.72M611.5 103.5v4.23M613.5 103.5v3.44M616.5 103.5v6.06M618.5 103.5v4.03M623.5 103.5v1.63M627.5 103.5v1.8M630.5 103.5v3.27M635.5 103.5v1.93M640.5 103.5v4.77M642.5 103.5v4.68M644.5 103.5v3.9M647.5 103.5v2.42M649.5 103.5v3.42M652.5 103.5v5.33M654.5 103.5v3.88M656.5 103.5v2.23M659.5 103.5v4.8M662.5 103.5v5.02M667.5 103.5v6.34M669.5 103.5v2.03M673.5 103.5v1.78M675.5 103.5v2.4M678.5 103.5v4.19M681.5 103.5v3.44M684.5 103.5v6.07M687.5 103.5v3.92M692.5 103.5v3.32M695.5 103.5v3.37M697.5 103.5v4.39M699.5 103.5v2.82M703.5 103.5v3.22M707.5 103.5v2.5M710.5 103.5v1.5M712.5 103.5v6.41M717.5 103.5v3.81M722.5 103.5v2.05M727.5 103.5v2.11M730.5 103.5v1.68M734.5 103.5v4.48M738.5 103.5v2.97M740.5 103.5v4.01M742.5 103.5v2.93M745.5 103.5v2.03M748.5 103.5v6.05M750.5 103.5v2.78M752.5 103.5v4.23M754.5 103.5v6.29M759.5 103.5v3.11M762.5 103.5v1.58M765.5 103.5v3.02M768.5 103.5v4.42M770.5 103.5v1.64M773.5 103.5v4.29M776.5 103.5v5.71M778.5 103.5v2.45M781.5 103.5v6.73M785.5 103.5v4.36M787.5 103.5v2.83M789.5 103.5v3.67M791.5 103.5v2.1M794.5 103.5v3.81" stroke="#4a6488" stroke-width="0.9" opacity="0.9"/><path d="M5.5 126.5v-1.18M9.5 126.5v-0.63M11.5 126.5v-1.69M15.5 126.5v-1.9M17.5 126.5v-1.88M21.5 126.5v-1.94M23.5 126.5v-0.76M27.5 126.5v-0.8M30.5 126.5v-0.68M34.5 126.5v-1.86M36.5 126.5v-1.76M40.5 126.5v-0.81M45.5 126.5v-1.8M47.5 126.5v-0.58M51.5 126.5v-1.87M56.5 126.5v-1.1M58.5 126.5v-1.39M63.5 126.5v-0.61M66.5 126.5v-1.11M70.5 126.5v-1.16M75.5 126.5v-0.59M77.5 126.5v-0.96M81.5 126.5v-1.32M86.5 126.5v-1.89M90.5 126.5v-1.05M95.5 126.5v-1.51M99.5 126.5v-1.37M104.5 126.5v-0.64M106.5 126.5v-0.51M110.5 126.5v-0.74M113.5 126.5v-0.54M118.5 126.5v-1.39M120.5 126.5v-1.04M125.5 126.5v-1.3M128.5 126.5v-0.54M130.5 126.5v-1.1M135.5 126.5v-0.65M140.5 126.5v-1.63M145.5 126.5v-1.69M148.5 126.5v-1.51M153.5 126.5v-1.94M155.5 126.5v-1.75M157.5 126.5v-1.4M160.5 126.5v-1.06M163.5 126.5v-1.85M167.5 126.5v-0.72M172.5 126.5v-0.67M176.5 126.5v-1.73M181.5 126.5v-0.51M184.5 126.5v-1.84M189.5 126.5v-1.82M193.5 126.5v-1.94M198.5 126.5v-1.56M200.5 126.5v-1.38M202.5 126.5v-0.55M207.5 126.5v-0.87M210.5 126.5v-0.66M215.5 126.5v-1.9M217.5 126.5v-1.71M220.5 126.5v-0.91M222.5 126.5v-0.77M227.5 126.5v-1.12M232.5 126.5v-1.29M235.5 126.5v-1.39M237.5 126.5v-1.9M240.5 126.5v-1.56M243.5 126.5v-1.19M248.5 126.5v-1.41M252.5 126.5v-1.48M256.5 126.5v-0.97M258.5 126.5v-0.69M261.5 126.5v-1.99M263.5 126.5v-1.49M265.5 126.5v-0.86M267.5 126.5v-1.85M271.5 126.5v-1.32M276.5 126.5v-1.95M281.5 126.5v-0.69M285.5 126.5v-1.65M289.5 126.5v-1.93M293.5 126.5v-1.61M296.5 126.5v-0.72M299.5 126.5v-0.76M301.5 126.5v-1.93M306.5 126.5v-1.77M310.5 126.5v-1.35M312.5 126.5v-1.82M314.5 126.5v-0.57M316.5 126.5v-1.27M321.5 126.5v-0.57M326.5 126.5v-1.78M329.5 126.5v-1.5M334.5 126.5v-1.05M336.5 126.5v-1.64M341.5 126.5v-1.59M346.5 126.5v-1.19M349.5 126.5v-0.72M354.5 126.5v-1.52M356.5 126.5v-0.73M361.5 126.5v-1.88M364.5 126.5v-0.71M369.5 126.5v-1.73M372.5 126.5v-1.52M374.5 126.5v-1.51M377.5 126.5v-1.6M380.5 126.5v-1.03M384.5 126.5v-1.46M388.5 126.5v-1.5M390.5 126.5v-1.77M392.5 126.5v-1.5M397.5 126.5v-1.71M402.5 126.5v-1.19M404.5 126.5v-1.4M407.5 126.5v-1.79M411.5 126.5v-1.05M413.5 126.5v-1.47M417.5 126.5v-1.44M422.5 126.5v-1.39M424.5 126.5v-1.66M427.5 126.5v-1.19M432.5 126.5v-1.56M436.5 126.5v-1.88M438.5 126.5v-1.99M443.5 126.5v-0.97M445.5 126.5v-1.54M447.5 126.5v-1.36M452.5 126.5v-1.62M454.5 126.5v-1.4M459.5 126.5v-1.04M461.5 126.5v-1.01M464.5 126.5v-1.36M468.5 126.5v-0.84M470.5 126.5v-1.29M475.5 126.5v-1.84M479.5 126.5v-1.01M483.5 126.5v-1.55M487.5 126.5v-0.6M491.5 126.5v-1.84M494.5 126.5v-1.8M499.5 126.5v-0.58M502.5 126.5v-0.87M504.5 126.5v-1.76M507.5 126.5v-1.74M509.5 126.5v-1.44M514.5 126.5v-0.7M518.5 126.5v-1.27M522.5 126.5v-0.59M527.5 126.5v-1.08M529.5 126.5v-1.6M531.5 126.5v-0.89M534.5 126.5v-0.76M539.5 126.5v-1.41M543.5 126.5v-1.77M546.5 126.5v-1.83M550.5 126.5v-1.85M554.5 126.5v-0.63M556.5 126.5v-1.22M559.5 126.5v-0.84M561.5 126.5v-1.74M564.5 126.5v-0.59M569.5 126.5v-1.79M574.5 126.5v-0.54M578.5 126.5v-0.56M580.5 126.5v-1.89M582.5 126.5v-0.99M585.5 126.5v-1.55M589.5 126.5v-1.58M592.5 126.5v-1.12M596.5 126.5v-1.8M600.5 126.5v-1.02M605.5 126.5v-1.05M608.5 126.5v-1.88M610.5 126.5v-1.95M615.5 126.5v-0.59M618.5 126.5v-1.86M622.5 126.5v-1.43M626.5 126.5v-0.91M628.5 126.5v-0.83M631.5 126.5v-1.77M634.5 126.5v-1.24M639.5 126.5v-1.12M643.5 126.5v-0.96M646.5 126.5v-1.3M648.5 126.5v-1.2M652.5 126.5v-1.41M654.5 126.5v-0.87M657.5 126.5v-0.85M660.5 126.5v-0.87M663.5 126.5v-1.25M668.5 126.5v-1.87M671.5 126.5v-1.31M673.5 126.5v-1.73M676.5 126.5v-0.6M680.5 126.5v-1.52M682.5 126.5v-1.82M686.5 126.5v-1.8M690.5 126.5v-0.57M695.5 126.5v-0.86M698.5 126.5v-0.64M702.5 126.5v-0.58M707.5 126.5v-0.65M711.5 126.5v-1.16M713.5 126.5v-0.87M718.5 126.5v-1.74M722.5 126.5v-0.51M727.5 126.5v-1.3M732.5 126.5v-1.92M737.5 126.5v-0.84M740.5 126.5v-0.69M744.5 126.5v-0.84M746.5 126.5v-1.26M750.5 126.5v-1.12M752.5 126.5v-1.29M754.5 126.5v-1.9M759.5 126.5v-1.82M764.5 126.5v-1.97M767.5 126.5v-0.76M772.5 126.5v-1.91M775.5 126.5v-1.99M778.5 126.5v-0.69M780.5 126.5v-1.02M785.5 126.5v-1.12M787.5 126.5v-0.71M790.5 126.5v-0.54M794.5 126.5v-1.47" stroke="#1f66aa" stroke-width="0.8"/>
<path d="M2.5 320.5 L28 320.5 L28.5 320.07 L29 319.69 L29.5 319.37 L30 319.12 L30.5 319 L31 319.12 L31.5 319.37 L32 319.69 L32.5 320.07 L33 320.5 L42 320.5 L42.5 318.7 L43 316.99 L43.5 315.37 L44 313.84 L44.5 312.43 L45 311.13 L45.5 309.96 L46 308.95 L46.5 308.13 L47 307.59 L47.5 307.55 L48 308.12 L48.5 309.05 L49 310.22 L49.5 311.58 L50 313.1 L50.5 314.77 L51 316.56 L51.5 318.48 L52 320.5 L59 320.5 L59.5 317.29 L60 314.22 L60.5 311.3 L61 308.55 L61.5 305.98 L62 303.6 L62.5 301.43 L63 299.51 L63.5 297.88 L64 296.63 L64.5 296.01 L65 296.31 L65.5 297.42 L66 298.99 L66.5 300.91 L67 303.1 L67.5 305.52 L68 308.16 L68.5 310.99 L69 314 L69.5 317.17 L70 320.5 L77 320.5 L77.5 316.44 L78 312.54 L78.5 308.82 L79 305.28 L79.5 301.93 L80 298.8 L80.5 295.89 L81 293.24 L81.5 290.88 L82 288.86 L82.5 287.28 L83 286.36 L83.5 286.5 L84 287.71 L84.5 289.58 L85 291.9 L85.5 294.58 L86 297.57 L86.5 300.83 L87 304.34 L87.5 308.07 L88 312.02 L88.5 316.17 L89 320.5 L99 320.5 L99.5 319.17 L100 317.9 L100.5 316.68 L101 315.51 L101.5 314.41 L102 313.37 L102.5 312.39 L103 311.5 L103.5 310.69 L104 309.98 L104.5 309.39 L105 308.96 L105.5 308.8 L106 308.92 L106.5 309.25 L107 309.73 L107.5 310.3 L108 310.95 L108.5 311.67 L109 312.46 L109.5 313.3 L110 314.19 L110.5 315.14 L111 316.13 L111.5 317.16 L112 318.23 L112.5 319.35 L113 320.5 L134 320.5 L134.5 318.49 L135 316.57 L135.5 314.74 L136 313.01 L136.5 311.38 L137 309.86 L137.5 308.46 L138 307.2 L138.5 306.1 L139 305.2 L139.5 304.57 L140 304.41 L140.5 304.82 L141 305.64 L141.5 306.71 L142 307.97 L142.5 309.39 L143 310.96 L143.5 312.65 L144 314.46 L144.5 316.37 L145 318.39 L145.5 320.5 L155 320.5 L155.5 319.82 L156 319.19 L156.5 318.6 L157 318.06 L157.5 317.58 L158 317.16 L158.5 316.83 L159 316.62 L159.5 316.66 L160 316.94 L160.5 317.35 L161 317.85 L161.5 318.42 L162 319.06 L162.5 319.75 L163 320.5 L170 320.5 L170.5 318.63 L171 316.85 L171.5 315.17 L172 313.59 L172.5 312.12 L173 310.77 L173.5 309.56 L174 308.51 L174.5 307.66 L175 307.09 L175.5 307.05 L176 307.64 L176.5 308.61 L177 309.83 L177.5 311.24 L178 312.82 L178.5 314.55 L179 316.41 L179.5 318.4 L180 320.5 L188 320.5 L188.5 317.22 L189 314.06 L189.5 311.02 L190 308.11 L190.5 305.33 L191 302.7 L191.5 300.22 L192 297.91 L192.5 295.78 L193 293.86 L193.5 292.17 L194 290.77 L194.5 289.76 L195 289.4 L195.5 289.76 L196 290.77 L196.5 292.17 L197 293.86 L197.5 295.78 L198 297.91 L198.5 300.22 L199 302.7 L199.5 305.33 L200 308.11 L200.5 311.02 L201 314.06 L201.5 317.22 L202 320.5 L210 320.5 L210.5 320.14 L211 319.81 L211.5 319.52 L212 319.28 L212.5 319.09 L213 319 L213.5 319.09 L214 319.28 L214.5 319.52 L215 319.81 L215.5 320.14 L216 320.5 L237 320.5 L237.5 315.97 L238 311.61 L238.5 307.45 L239 303.48 L239.5 299.73 L240 296.21 L240.5 292.94 L241 289.94 L241.5 287.26 L242 284.94 L242.5 283.08 L243 281.88 L243.5 281.76 L244 282.66 L244.5 284.24 L245 286.28 L245.5 288.66 L246 291.34 L246.5 294.27 L247 297.44 L247.5 300.83 L248 304.41 L248.5 308.18 L249 312.12 L249.5 316.23 L250 320.5 L255 320.5 L255.5 313.38 L256 306.48 L256.5 299.8 L257 293.35 L257.5 287.14 L258 281.19 L258.5 275.5 L259 270.1 L259.5 265 L260 260.23 L260.5 255.82 L261 251.8 L261.5 248.24 L262 245.23 L262.5 242.91 L263 241.67 L263.5 241.77 L264 243.09 L264.5 245.29 L265 248.09 L265.5 251.37 L266 255.05 L266.5 259.09 L267 263.44 L267.5 268.09 L268 273.01 L268.5 278.18 L269 283.59 L269.5 289.23 L270 295.09 L270.5 301.15 L271 307.41 L271.5 313.86 L272 320.5 L279 320.5 L279.5 318.12 L280 315.85 L280.5 313.71 L281 311.7 L281.5 309.83 L282 308.13 L282.5 306.61 L283 305.3 L283.5 304.27 L284 303.65 L284.5 303.72 L285 304.45 L285.5 305.55 L286 306.9 L286.5 308.46 L287 310.19 L287.5 312.09 L288 314.13 L288.5 316.29 L289 318.58 L289.5 320.5 L346 320.5 L346.5 315.97 L347 311.55 L347.5 307.26 L348 303.1 L348.5 299.07 L349 295.18 L349.5 291.43 L350 287.83 L350.5 284.4 L351 281.13 L351.5 278.04 L352 275.15 L352.5 272.48 L353 270.03 L353.5 267.86 L354 266.01 L354.5 264.56 L355 263.71 L355.5 263.64 L356 264.44 L356.5 265.95 L357 267.93 L357.5 270.28 L358 272.92 L358.5 275.83 L359 278.98 L359.5 282.35 L360 285.92 L360.5 289.67 L361 293.61 L361.5 297.71 L362 301.97 L362.5 306.39 L363 310.95 L363.5 315.66 L364 320.5 L370 320.5 L370.5 313.45 L371 306.64 L371.5 300.06 L372 293.73 L372.5 287.66 L373 281.87 L373.5 276.37 L374 271.19 L374.5 266.35 L375 261.89 L375.5 257.84 L376 254.27 L376.5 251.27 L377 249.03 L377.5 248.01 L378 248.26 L378.5 249.51 L379 251.44 L379.5 253.85 L380 256.64 L380.5 259.76 L381 263.18 L381.5 266.85 L382 270.77 L382.5 274.91 L383 279.26 L383.5 283.81 L384 288.55 L384.5 293.46 L385 298.55 L385.5 303.81 L386 309.22 L386.5 314.79 L387 320.5 L417 320.5 L417.5 315.95 L418 311.52 L418.5 307.21 L419 303.01 L419.5 298.95 L420 295.01 L420.5 291.22 L421 287.56 L421.5 284.06 L422 280.72 L422.5 277.54 L423 274.55 L423.5 271.75 L424 269.17 L424.5 266.83 L425 264.76 L425.5 263.02 L426 261.7 L426.5 261.03 L427 261.15 L427.5 262.26 L428 264.09 L428.5 266.41 L429 269.11 L429.5 272.14 L430 275.47 L430.5 279.05 L431 282.87 L431.5 286.92 L432 291.17 L432.5 295.62 L433 300.26 L433.5 305.07 L434 310.05 L434.5 315.2 L435 320.5 L439 320.5 L439.5 314.31 L440 308.36 L440.5 302.67 L441 297.25 L441.5 292.13 L442 287.32 L442.5 282.85 L443 278.76 L443.5 275.09 L444 271.93 L444.5 269.38 L445 267.75 L445.5 267.54 L446 268.28 L446.5 269.69 L447 271.54 L447.5 273.72 L448 276.18 L448.5 278.89 L449 281.83 L449.5 284.96 L450 288.29 L450.5 291.79 L451 295.45 L451.5 299.27 L452 303.24 L452.5 307.36 L453 311.61 L453.5 315.99 L454 320.5 L458 320.5 L458.5 319.53 L459 318.66 L459.5 317.88 L460 317.24 L460.5 316.76 L461 316.62 L461.5 317.16 L462 318.06 L462.5 319.19 L463 320.5 L469 320.5 L469.5 319.45 L470 314.29 L470.5 309.26 L471 304.37 L471.5 299.62 L472 295.01 L472.5 290.56 L473 286.28 L473.5 282.15 L474 278.21 L474.5 274.45 L475 270.89 L475.5 267.54 L476 264.43 L476.5 261.57 L477 259.01 L477.5 256.77 L478 254.95 L478.5 253.69 L479 253.3 L479.5 254.08 L480 256.26 L480.5 259.28 L481 262.93 L481.5 267.09 L482 271.69 L482.5 276.68 L483 282.04 L483.5 287.73 L484 293.73 L484.5 300.02 L485 306.59 L485.5 313.42 L486 320.5 L491 320.5 L491.5 315.12 L492 309.88 L492.5 304.77 L493 299.8 L493.5 294.97 L494 290.3 L494.5 285.78 L495 281.42 L495.5 277.23 L496 273.23 L496.5 269.41 L497 265.8 L497.5 262.4 L498 259.24 L498.5 256.35 L499 253.74 L499.5 251.48 L500 249.65 L500.5 248.38 L501 248 L501.5 248.19 L502 248.89 L502.5 249.98 L503 251.36 L503.5 252.97 L504 254.78 L504.5 256.76 L505 258.89 L505.5 261.16 L506 263.57 L506.5 266.11 L507 268.76 L507.5 271.52 L508 274.38 L508.5 277.35 L509 280.42 L509.5 283.58 L510 286.82 L510.5 290.16 L511 293.58 L511.5 297.08 L512 300.66 L512.5 304.32 L513 308.06 L513.5 311.87 L514 315.75 L514.5 319.7 L515 320.5 L527.5 320.5 L528 315.88 L528.5 311.38 L529 306.98 L529.5 302.7 L530 298.54 L530.5 294.5 L531 290.58 L531.5 286.8 L532 283.16 L532.5 279.67 L533 276.33 L533.5 273.15 L534 270.14 L534.5 267.32 L535 264.71 L535.5 262.32 L536 260.19 L536.5 258.36 L537 256.91 L537.5 255.99 L538 255.81 L538.5 256.36 L539 257.7 L539.5 259.54 L540 261.76 L540.5 264.3 L541 267.1 L541.5 270.14 L542 273.4 L542.5 276.87 L543 280.53 L543.5 284.36 L544 288.36 L544.5 292.52 L545 296.84 L545.5 301.3 L546 305.9 L546.5 310.64 L547 315.51 L547.5 320.5 L580 320.5 L580.5 316.57 L581 312.76 L581.5 309.08 L582 305.54 L582.5 302.14 L583 298.89 L583.5 295.79 L584 292.87 L584.5 290.13 L585 287.58 L585.5 285.26 L586 283.18 L586.5 281.4 L587 279.99 L587.5 279.12 L588 279.04 L588.5 279.78 L589 281.13 L589.5 282.89 L590 284.95 L590.5 287.27 L591 289.82 L591.5 292.57 L592 295.52 L592.5 298.64 L593 301.92 L593.5 305.36 L594 308.94 L594.5 312.66 L595 316.52 L595.5 320.5 L603 320.5 L603.5 316.43 L604 312.52 L604.5 308.75 L605 305.16 L605.5 301.73 L606 298.5 L606.5 295.46 L607 292.63 L607.5 290.05 L608 287.74 L608.5 285.75 L609 284.16 L609.5 283.15 L610 283.04 L610.5 283.71 L611 284.93 L611.5 286.51 L612 288.37 L612.5 290.47 L613 292.78 L613.5 295.27 L614 297.93 L614.5 300.75 L615 303.71 L615.5 306.82 L616 310.06 L616.5 313.42 L617 316.9 L617.5 320.5 L631.5 320.5 L632 315.12 L632.5 309.96 L633 305.02 L633.5 300.32 L634 295.88 L634.5 291.7 L635 287.82 L635.5 284.27 L636 281.09 L636.5 278.34 L637 276.14 L637.5 274.72 L638 274.56 L638.5 275.49 L639 277.16 L639.5 279.32 L640 281.85 L640.5 284.7 L641 287.82 L641.5 291.2 L642 294.81 L642.5 298.62 L643 302.64 L643.5 306.85 L644 311.23 L644.5 315.78 L645 320.5 L649 320.5 L649.5 311.61 L650 302.95 L650.5 294.55 L651 286.41 L651.5 278.53 L652 270.94 L652.5 263.65 L653 256.67 L653.5 250.01 L654 243.71 L654.5 237.78 L655 232.26 L655.5 227.19 L656 222.63 L656.5 218.66 L657 215.4 L657.5 213.13 L658 212.4 L658.5 212.86 L659 214.44 L659.5 216.78 L660 219.68 L660.5 223.02 L661 226.76 L661.5 230.83 L662 235.22 L662.5 239.89 L663 244.83 L663.5 250.01 L664 255.43 L664.5 261.07 L665 266.93 L665.5 272.99 L666 279.24 L666.5 285.68 L667 292.3 L667.5 299.1 L668 306.07 L668.5 313.2 L669 320.5 L675 320.5 L675.5 313.7 L676 307.15 L676.5 300.84 L677 294.8 L677.5 289.04 L678 283.58 L678.5 278.44 L679 273.65 L679.5 269.23 L680 265.24 L680.5 261.74 L681 258.84 L681.5 256.75 L682 256 L682.5 256.34 L683 257.46 L683.5 259.1 L684 261.11 L684.5 263.43 L685 266 L685.5 268.81 L686 271.83 L686.5 275.05 L687 278.44 L687.5 282.01 L688 285.73 L688.5 289.61 L689 293.63 L689.5 297.79 L690 302.08 L690.5 306.5 L691 311.05 L691.5 315.72 L692 320.5 L742.5 320.5 L743 319.51 L743.5 318.31 L744 317.15 L744.5 316.03 L745 314.96 L745.5 313.93 L746 312.95 L746.5 312.02 L747 311.15 L747.5 310.34 L748 309.6 L748.5 308.93 L749 308.36 L749.5 307.89 L750 307.57 L750.5 307.51 L751 307.9 L751.5 308.67 L752 309.67 L752.5 310.84 L753 312.16 L753.5 313.61 L754 315.18 L754.5 316.86 L755 318.63 L755.5 320.5 L766 320.5 L766.5 314.33 L767 308.33 L767.5 302.5 L768 296.85 L768.5 291.38 L769 286.12 L769.5 281.06 L770 276.21 L770.5 271.6 L771 267.22 L771.5 263.11 L772 259.28 L772.5 255.76 L773 252.6 L773.5 249.84 L774 247.58 L774.5 246 L775 245.5 L775.5 245.9 L776 247.2 L776.5 249.1 L777 251.44 L777.5 254.13 L778 257.13 L778.5 260.4 L779 263.91 L779.5 267.65 L780 271.6 L780.5 275.74 L781 280.07 L781.5 284.58 L782 289.25 L782.5 294.09 L783 299.08 L783.5 304.23 L784 309.51 L784.5 314.94 L785 320.5 L797.5 320.5 L797.5 322 L797.5 362.5 L793.75 365 L792.83 364.78 L791.9 367.5 L790.95 366.6 L790 362.5 L785 322 L765.6 322 L761.25 370 L755.6 322 L742.5 322 L741.25 322.5 L740.31 323.46 L739.38 325.39 L738.44 326.7 L737.5 327.5 L735.9 326 L735.6 322.5 L735.3 326 L734.37 327.36 L733.43 327.01 L732.5 328.75 L731.4 330.11 L730.3 330.07 L729.2 330.17 L728.1 331.25 L727.01 334.44 L725.92 340.34 L724.84 344.05 L723.75 346.25 L722.71 352.05 L721.67 354.91 L720.62 362.51 L719.58 364.6 L718.54 368.99 L717.5 375.5 L716.47 369.23 L715.43 366.78 L714.4 362 L713.35 356.68 L712.3 353.37 L711.25 347.5 L710.2 343.68 L709.15 344.57 L708.1 341.25 L707.01 344.65 L705.92 344.53 L704.84 350.46 L703.75 351.25 L702.81 350.59 L701.88 353.86 L700.94 353.99 L700 355 L699.06 352.77 L698.12 351.81 L697.19 351.46 L696.25 348.75 L691.9 322 L674.4 322 L672.5 357.5 L670 322 L649.4 322 L646.9 356.9 L645 322 L631.25 322 L623.75 355 L617.5 322 L603.75 322 L599.4 365 L596.25 322 L580 322 L577.5 335 L576.57 337.65 L575.63 341.08 L574.7 345.64 L573.77 346.55 L572.83 352.04 L571.9 355 L570.85 353.03 L569.8 350.93 L568.75 351.25 L567.81 347.16 L566.88 344.42 L565.94 342.31 L565 340 L564 336.48 L563 335.82 L562 333.21 L561 329.27 L560 326 L559.4 325.6 L559 326 L551.9 362.5 L548.75 322 L526.9 322 L520.6 363.75 L515 322 L491.25 322 L488.1 353.75 L486.25 322 L470 322 L466.9 348.75 L463 322 L460 321.8 L458 322 L455 346.25 L453 322 L439.4 322 L436.25 350 L433 322 L416.25 322 L414.4 340 L413.15 352.84 L411.9 362.5 L410.95 365.19 L410 370 L408.97 366.89 L407.93 362.64 L406.9 358.75 L405.6 355 L404.3 359.16 L403 360 L401.8 359.87 L400.6 361.25 L399.68 360.72 L398.75 357.5 L397.7 357.99 L396.65 353.98 L395.6 353.75 L394.3 353.83 L393 356 L391.25 360 L390.32 351.34 L389.4 340 L387.5 322 L369.4 322 L366.25 360 L364.4 322 L345 322 L336.9 358.75 L335.85 355.71 L334.8 354.91 L333.75 355 L332.81 354.92 L331.88 352.7 L330.94 354.57 L330 353 L329.06 351.96 L328.12 354.33 L327.19 355.06 L326.25 353.75 L325.32 351.71 L324.4 351.25 L323.8 347 L323.5 341.25 L323.2 347 L322.23 346.23 L321.25 347.5 L320.16 344.62 L319.07 345.52 L317.99 344.28 L316.9 343 L315.65 342.09 L314.4 343 L313.3 345.26 L312.2 346.36 L311.1 351.57 L310 352.5 L308.9 356.64 L307.8 361.3 L306.7 363.18 L305.6 366.9 L304.6 363.57 L303.6 365.16 L302.6 362.87 L301.6 361.97 L300.6 358.75 L299.68 361.69 L298.75 363.37 L297.82 364.82 L296.9 366.25 L289.4 322 L280 322 L276.25 363 L273.75 322 L255 322 L251.9 359.4 L248.1 322 L236.9 322 L230.6 363.75 L226.9 355 L223.75 363.75 L215.2 324 L214.5 322.5 L213.75 322 L213 322.5 L212.3 324 L205.6 363.75 L201.25 322 L188.75 322 L185 364.4 L180.6 322 L172.5 322 L168 359.4 L162.5 322 L155 322 L150.6 363.75 L145.6 322 L134 322 L126.25 363.75 L112.5 322 L99.5 322 L94.4 363.75 L89.4 322 L78 322 L73.75 357.5 L70 322 L59.4 322 L55 362.5 L52 322 L43 322 L38.75 362.5 L32.6 326 L31.4 323 L30 322 L28.6 323 L27.4 326 L20.6 365 L16.6 334 L15.4 330 L14.4 328.6 L13.4 330 L12.2 334 L6.25 365 L2.5 338 L2.5 322 Z" fill="#fff"/>
<rect x="81" y="96" width="1.3" height="47" fill="#eef27a"/>
<path d="M78.5 96h6l-3 4z M78.5 143h6l-3 -4z" fill="#e6ee60"/>
<rect x="399" y="145" width="1" height="353" fill="#c4eea0"/>
<path d="M397 145h5l-2.5 4.5z M397 498h5l-2.5 -4.5z" fill="#e0ee60"/>
</svg></div>
<div class="a" style="left:0;top:498px;width:480px;height:21px;background:#ece9d8"></div><div class="a" style="left:2px;top:499px;width:477px;height:19px;background:linear-gradient(#f6f5f0,#fdfcf9 30%,#fbfaf5 70%,#eeede6)"></div><div class="a" style="left:2px;top:500px;width:13px;height:17px;background:linear-gradient(90deg,#c6d6f6,#d8e4fb 50%,#c2d2f4);border-radius:1px;box-shadow:inset 0 0 0 1px #b4c8ee"></div><svg class="a" style="left:2px;top:500px" width="13" height="17"><path d="M8 5.5l-3 3l3 3" fill="none" stroke="#3a5088" stroke-width="1.6"/></svg><div class="a" style="left:59px;top:500px;width:12px;height:17px;background:linear-gradient(90deg,#c2d4f6,#d4e2fb 50%,#bfd0f4);border-radius:1px;box-shadow:inset 0 0 0 1px #aec4ee"></div><svg class="a" style="left:59px;top:500px" width="12" height="17"><path d="M4.5 6v5M6.5 6v5M8.5 6v5" stroke="#8aa8dc" stroke-width="0.8"/></svg><div class="a" style="left:467px;top:500px;width:12px;height:17px;background:linear-gradient(90deg,#c6d6f6,#d8e4fb 50%,#c2d2f4);border-radius:1px;box-shadow:inset 0 0 0 1px #b4c8ee"></div><svg class="a" style="left:467px;top:500px" width="12" height="17"><path d="M5 5.5l3 3l-3 3" fill="none" stroke="#3a5088" stroke-width="1.6"/></svg><div class="a" style="left:479px;top:498px;width:321px;height:21px;background:#ece9d8"></div><div class="a" style="left:480px;top:499px;width:39px;height:19px;background:linear-gradient(#fbfbf8,#f4f3ee 60%,#e6e4dc);border:1px solid #c8c6bc;border-right-color:#8e8c84;border-bottom-color:#8e8c84"></div><div class="a" style="left:520px;top:499px;width:39px;height:19px;background:linear-gradient(#fbfbf8,#f4f3ee 60%,#e6e4dc);border:1px solid #c8c6bc;border-right-color:#8e8c84;border-bottom-color:#8e8c84"></div><div class="a" style="left:521px;top:500px;width:37px;height:17px;border:1px dotted #a89838"></div><div class="a" style="left:560px;top:499px;width:39px;height:19px;background:linear-gradient(#fbfbf8,#f4f3ee 60%,#e6e4dc);border:1px solid #c8c6bc;border-right-color:#8e8c84;border-bottom-color:#8e8c84"></div><div class="a" style="left:600px;top:499px;width:39px;height:19px;background:linear-gradient(#fbfbf8,#f4f3ee 60%,#e6e4dc);border:1px solid #c8c6bc;border-right-color:#8e8c84;border-bottom-color:#8e8c84"></div><div class="a" style="left:640px;top:499px;width:39px;height:19px;background:linear-gradient(#fbfbf8,#f4f3ee 60%,#e6e4dc);border:1px solid #c8c6bc;border-right-color:#8e8c84;border-bottom-color:#8e8c84"></div><div class="a" style="left:681px;top:499px;width:37px;height:19px;background:#fdfdfb;border-top:1px solid #fff;border-left:1px solid #fff;border-bottom:1px solid #d8d6cc"></div><div class="a" style="left:719px;top:499px;width:39px;height:19px;background:linear-gradient(#fbfbf8,#f4f3ee 60%,#e6e4dc);border:1px solid #c8c6bc;border-right-color:#8e8c84;border-bottom-color:#8e8c84"></div><div class="a" style="left:760px;top:499px;width:38px;height:19px;background:linear-gradient(#fbfbf8,#f4f3ee 60%,#e6e4dc);border:1px solid #c8c6bc;border-right-color:#8e8c84;border-bottom-color:#8e8c84"></div><svg class="a" style="left:479px;top:498px" width="321" height="21" viewBox="479 498 321 21"><path d="M500.5 508.5l4 4.5" stroke="#333" stroke-width="1.8" stroke-linecap="round"/><circle cx="498" cy="506" r="3.6" fill="#d6eef0" stroke="#4a6a70" stroke-width="1.2"/><path d="M495.8 506h4.4" stroke="#222" stroke-width="1.2"/><path d="M541.5 508.5l4 4.5" stroke="#333" stroke-width="1.8" stroke-linecap="round"/><circle cx="539" cy="506" r="3.6" fill="#d6eef0" stroke="#4a6a70" stroke-width="1.2"/><path d="M536.8 506h4.4M539 503.8v4.4" stroke="#222" stroke-width="1.2"/><path d="M580.5 508.5l4 4.5" stroke="#333" stroke-width="1.8" stroke-linecap="round"/><circle cx="578" cy="506" r="3.6" fill="#d6eef0" stroke="#4a6a70" stroke-width="1.2"/><path d="M620.5 508.5l4 4.5" stroke="#333" stroke-width="1.8" stroke-linecap="round"/><circle cx="618" cy="506" r="3.6" fill="#d6eef0" stroke="#4a6a70" stroke-width="1.2"/><path d="M612.5 506h11" stroke="#111" stroke-width="1.4"/><path d="M612 506l2-1.8v3.6zM624 506l-2-1.8v3.6z" fill="#111"/><path d="M660.5 508.5l4 4.5" stroke="#333" stroke-width="1.8" stroke-linecap="round"/><circle cx="658" cy="506" r="3.6" fill="#d6eef0" stroke="#4a6a70" stroke-width="1.2"/><path d="M658 500.5v13" stroke="#111" stroke-width="1.4"/><path d="M658 500l-1.8 2h3.6zM658 514l-1.8-2h3.6z" fill="#111"/><path d="M692 508.5h10M694 505v7M696 504v9M698 506v5M700 505v7" stroke="#b4aea0" stroke-width="0.8"/><path d="M703 503.5v3M702 505h2M703 510v3" stroke="#b4aea0" stroke-width="0.8"/><path d="M731 508.5h10M733 505v7M735 504v9M737 506v5M739 505v7" stroke="#b4aea0" stroke-width="0.8"/><path d="M742 503.5v3M741 505h2M742 510v3" stroke="#b4aea0" stroke-width="0.8"/><path d="M772 508.5h10M774 505v7M776 504v9M778 506v5M780 505v7" stroke="#b4aea0" stroke-width="0.8"/><path d="M783 503.5v3M782 505h2M783 510v3" stroke="#b4aea0" stroke-width="0.8"/></svg><div class="a" style="left:0;top:519px;width:800px;height:40px;background:#ece9d8"></div><div class="btn" style="left:0px;width:54px"></div><div class="btn" style="left:55px;width:54px"></div><div class="btn" style="left:111px;width:54px"></div><div class="a" style="left:166px;top:522px;width:55px;height:36px;background:#fff;border:1px solid #b0b0b0"></div><div class="btn" style="left:222px;width:53px"></div><div class="btn" style="left:276px;width:55px"></div><div class="btn" style="left:332px;width:54px"></div><div class="btn" style="left:388px;width:54px"></div><svg class="a" style="left:0;top:519px" width="442" height="40" viewBox="0 519 442 40"><path d="M21.5 533v14l12.5-7z" fill="#108a10"/><circle cx="83" cy="540" r="7.2" fill="#7a0808" stroke="#a02020" stroke-width="0.6"/><path d="M131 537c1.5-3 5.5-4.5 9-3" fill="none" stroke="#222" stroke-width="1.2"/><path d="M129.5 539.5l0.8-4.2l3.4 2.4z" fill="#222"/><path d="M135 546c3 1.5 7 1 9-2.5" fill="none" stroke="#222" stroke-width="1.2"/><path d="M145.5 541l0.2 3.8l-3.6-0.6z" fill="#222"/><path d="M142.3 531.5v5.5M145 531.5v5.5" stroke="#111" stroke-width="1.5"/><path d="M130.5 540.5v7l5-3.5z" fill="#1a8a1a"/><path d="M187.5 546.5h12.5v-13" fill="none" stroke="#777" stroke-width="1"/><rect x="244" y="533" width="2.5" height="14" fill="#111"/><path d="M254.5 533v14l-8-7z" fill="#111"/><path d="M304 533v14l-7.5-7zM311.5 533v14l-7.5-7z" fill="#111"/><path d="M353.5 533v14l7.5-7zM361 533v14l7.5-7z" fill="#111"/><path d="M410.5 533v14l8-7z" fill="#111"/><rect x="418.5" y="533" width="2.5" height="14" fill="#111"/></svg><div class="a" style="left:443px;top:522px;width:357px;height:36px;background:#e4e2ee;border-top:1px solid #c4c3cc;border-left:1px solid #c4c3cc"></div><div class="lab" style="left:450px;top:528px">Start</div><div class="lab" style="left:450px;top:544.5px">End</div><div class="lab" style="left:557px;top:528px">Sel Length</div><div class="lab" style="left:557px;top:544.5px">File Length</div><div class="vb" style="left:491px;top:527px;width:61px"></div><div class="vb" style="left:491px;top:543px;width:61px"></div><div class="vb" style="left:608px;top:527px;width:60px"></div><div class="vb" style="left:608px;top:543px;width:60px"></div><div class="lab" style="left:491px;top:528px;width:61px;text-align:center">0:00:00.000</div><div class="lab" style="left:491px;top:544px;width:61px;text-align:center">0:00:24.650</div><div class="lab" style="left:608px;top:528px;width:60px;text-align:center">0:00:24.650</div><div class="lab" style="left:608px;top:544px;width:60px;text-align:center">0:00:24.65</div><div class="a" style="left:669px;top:523px;width:131px;height:35px;background:#e4e2ee"></div><div class="a" style="left:697px;top:523.5px;width:106px;font-family:'Liberation Mono',monospace;font-size:15.6px;letter-spacing:0.65px;-webkit-text-stroke:0.15px #222;line-height:18px;color:#222;white-space:pre">0:00:02.49</div><div class="a" style="left:671px;top:541px;width:91px;height:7px;background:#8cc85a"></div><div class="a" style="left:762px;top:541px;width:8px;height:7px;background:#f2f2ee"></div><div class="a" style="left:770px;top:541px;width:28px;height:7px;background:#a8aca8"></div><div class="a" style="left:671px;top:548px;width:127px;height:2px;background:#6a7a60"></div><div class="a" style="left:671px;top:550px;width:127px;height:7px;background:#050505"></div>
<div id="status" class="a"><span style="left:2px">Express Scribe - footpedal controlled transcription software www.nch.com.au/scribe</span><div class="a" style="left:667px;top:1px;width:1px;height:16px;background:#c8c5b2;box-shadow:1px 0 0 #fff"></div><span style="left:672px">Sample Rate: 44100</span><span style="left:754px">Mono</span></div>
<div id="task" class="a"></div>
</body></html>
